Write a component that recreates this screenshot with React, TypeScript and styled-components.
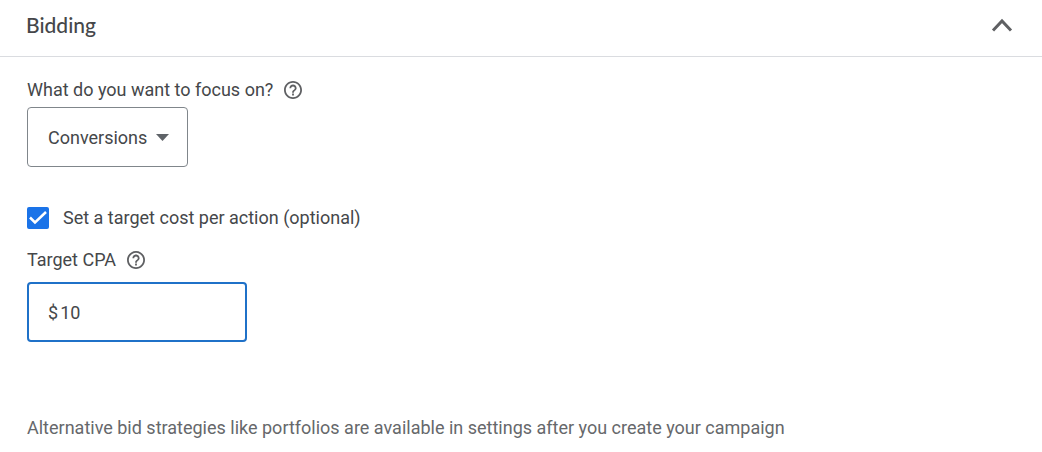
import React, { useState } from 'react';
import styled, { createGlobalStyle } from 'styled-components';

const GlobalStyle = createGlobalStyle`
  *, *::before, *::after { box-sizing: border-box; }
  body {
    margin: 0;
    background: #fff;
    color: #45474a;
    font-family: Roboto, "Liberation Sans", sans-serif;
    font-size: 18px;
    line-height: 24px;
  }
`;

const Header = styled.header`
  display: flex;
  align-items: center;
  justify-content: space-between;
  height: 57px;
  padding: 0 28px 6px 26px;
  border-bottom: 1px solid #dadce0;
`;

const Title = styled.h2`
  margin: 0;
  font-family: Lato, "Liberation Sans", sans-serif;
  font-size: 21px;
  font-weight: 500;
  line-height: 24px;
`;

const IconButton = styled.button`
  display: flex;
  padding: 0;
  border: 0;
  background: none;
  color: #5f6063;
  cursor: pointer;
`;

const Body = styled.div`
  padding: 21px 27px 12px;
`;

const LabelRow = styled.div`
  display: flex;
  align-items: center;
  gap: 11px;
`;

const SelectWrap = styled.div`
  display: grid;
  align-items: center;
  width: 161px;
  margin: 5px 0 39px;
  > * { grid-area: 1 / 1; }
  svg { justify-self: end; margin-right: 19px; pointer-events: none; }
`;

const Select = styled.select`
  appearance: none;
  width: 100%;
  height: 60px;
  padding: 2px 36px 0 20px;
  border: 1px solid #80868b;
  border-radius: 4px;
  background: #fff;
  color: inherit;
  font: inherit;
`;

const CheckRow = styled.label`
  display: flex;
  align-items: center;
  gap: 14px;
  margin-bottom: 18px;
`;

const CheckBox = styled.span`
  display: grid;
  > * { grid-area: 1 / 1; }
  svg { pointer-events: none; }
`;

const CheckInput = styled.input`
  appearance: none;
  width: 22px;
  height: 22px;
  margin: 0;
  border: 2px solid #5f6368;
  border-radius: 2px;
  &:checked { border-color: #1a73e8; background: #1a73e8; }
`;

const MoneyField = styled.div`
  display: flex;
  align-items: center;
  gap: 2px;
  width: 220px;
  height: 60px;
  margin: 10px 0 74px;
  padding: 2px 18px 0 19px;
  border: 2px solid #1f71c8;
  border-radius: 4px;
`;

const MoneyInput = styled.input`
  flex: 1;
  min-width: 0;
  padding: 0;
  border: 0;
  outline: 0;
  background: none;
  color: inherit;
  font: inherit;
`;

const Note = styled.p`
  margin: 0;
  color: #66686b;
`;

const HelpButton = ({ label }: { label: string }) => (
  <IconButton type="button" aria-label={label}>
    <svg width="18" height="18" viewBox="2 2 20 20" fill="currentColor" aria-hidden="true">
      <path d="M11 18h2v-2h-2v2zm1-16C6.480 2 2 6.480 2 12s4.480 10 10 10 10-4.480 10-10S17.520 2 12 2zm0 18c-4.410 0-8-3.590-8-8s3.590-8 8-8 8 3.590 8 8-3.590 8-8 8zm0-14c-2.210 0-4 1.790-4 4h2c0-1.100.9-2 2-2s2 .9 2 2c0 2-3 1.750-3 5h2c0-2.250 3-2.500 3-5 0-2.210-1.790-4-4-4z" />
    </svg>
  </IconButton>
);

export default function App() {
  const [open, setOpen] = useState(true);
  const [useTarget, setUseTarget] = useState(true);
  const [amount, setAmount] = useState('10');

  return (
    <section>
      <GlobalStyle />
      <Header>
        <Title>Bidding</Title>
        <IconButton type="button" aria-label="Toggle bidding" aria-expanded={open} onClick={() => setOpen(!open)}>
          <svg width="24" height="24" viewBox="0 0 24 24" fill="none" stroke="currentColor" strokeWidth="3" aria-hidden="true">
            <path d={open ? 'M3 17.500 12 8l9 9.500' : 'M3 7l9 9.500L21 7'} />
          </svg>
        </IconButton>
      </Header>
      {open && (
        <Body>
          <LabelRow>
            <label htmlFor="focus">What do you want to focus on?</label>
            <HelpButton label="Help with focus" />
          </LabelRow>
          <SelectWrap>
            <Select id="focus">
              <option>Conversions</option>
            </Select>
            <svg width="13" height="7" viewBox="0 0 13 7" fill="#5f6368" aria-hidden="true">
              <path d="M0 0h13L6.500 7z" />
            </svg>
          </SelectWrap>
          <CheckRow>
            <CheckBox>
              <CheckInput type="checkbox" checked={useTarget} onChange={(e) => setUseTarget(e.target.checked)} />
              {useTarget && (
                <svg width="22" height="22" viewBox="0 0 22 22" fill="none" stroke="#fff" strokeWidth="2.500" aria-hidden="true">
                  <path d="M3 10.500 8 15.500 19 5" />
                </svg>
              )}
            </CheckBox>
            Set a target cost per action (optional)
          </CheckRow>
          <LabelRow>
            <label htmlFor="cpa">Target CPA</label>
            <HelpButton label="Help with target CPA" />
          </LabelRow>
          <MoneyField>
            <span>$</span>
            <MoneyInput id="cpa" inputMode="decimal" value={amount} onChange={(e) => setAmount(e.target.value)} />
          </MoneyField>
          <Note>Alternative bid strategies like portfolios are available in settings after you create your campaign</Note>
        </Body>
      )}
    </section>
  );
}
